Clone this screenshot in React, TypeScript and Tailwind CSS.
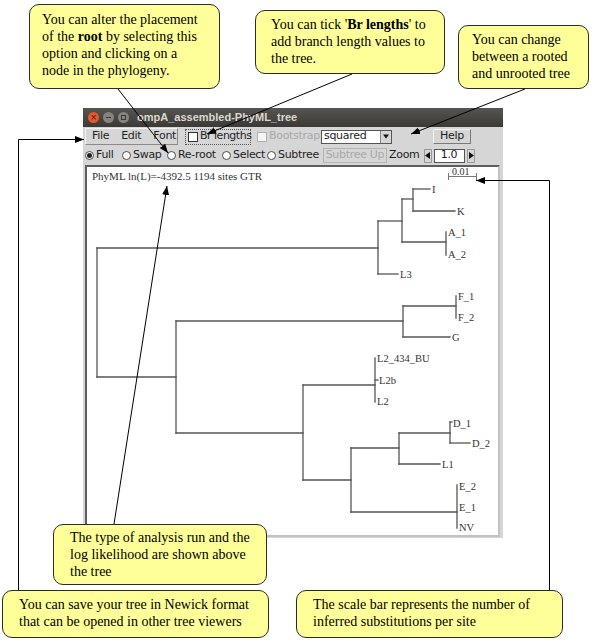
import React from 'react';

type Seg = [number, number, number, number];

// tree branches, in page coordinates (the svg viewBox starts at the canvas corner)
const branches: Seg[] = [
  [97, 248, 97, 377],
  [97, 248, 378, 248],
  [97, 377, 176, 377],
  [378, 221, 378, 274],
  [378, 221, 402, 221],
  [378, 274, 398, 274],
  [402, 199, 402, 242],
  [402, 199, 413, 199],
  [402, 242, 446, 242],
  [413, 189, 413, 211],
  [413, 189, 430, 189],
  [413, 211, 455, 211],
  [446, 232, 446, 255],
  [176, 321, 176, 433],
  [176, 321, 403, 321],
  [176, 433, 303, 433],
  [403, 306, 403, 337],
  [403, 306, 456, 306],
  [403, 337, 450, 337],
  [456, 296, 456, 318],
  [303, 385, 303, 480],
  [303, 385, 375, 385],
  [375, 358, 375, 402],
  [375, 380, 378, 380],
  [303, 480, 351, 480],
  [351, 448, 351, 512],
  [351, 448, 399, 448],
  [351, 512, 457, 512],
  [399, 433, 399, 464],
  [399, 433, 450, 433],
  [399, 464, 440, 464],
  [450, 422, 450, 443],
  [450, 422, 452, 422],
  [450, 443, 470, 443],
  [457, 485, 457, 528],
];

const labels: { t: string; x: number; y: number }[] = [
  { t: 'I', x: 432, y: 189 },
  { t: 'K', x: 457, y: 211 },
  { t: 'A_1', x: 448, y: 232 },
  { t: 'A_2', x: 448, y: 254 },
  { t: 'L3', x: 400, y: 274 },
  { t: 'F_1', x: 458, y: 296 },
  { t: 'F_2', x: 458, y: 317 },
  { t: 'G', x: 452, y: 337 },
  { t: 'L2_434_BU', x: 377, y: 358 },
  { t: 'L2b', x: 379, y: 380 },
  { t: 'L2', x: 377, y: 401 },
  { t: 'D_1', x: 453, y: 423 },
  { t: 'D_2', x: 472, y: 443 },
  { t: 'L1', x: 442, y: 464 },
  { t: 'E_2', x: 459, y: 486 },
  { t: 'E_1', x: 459, y: 507 },
  { t: 'NV', x: 459, y: 527 },
];

const Callout: React.FC<{ className: string; children: React.ReactNode }> = ({ className, children }) => (
  <div
    className={`absolute z-20 rounded-[10px] border border-[#2b2b2b] bg-[#ffff99] whitespace-nowrap font-['Liberation_Serif','Times_New_Roman',serif] text-[14px] leading-[17px] text-black ${className}`}
  >
    {children}
  </div>
);

const Radio: React.FC<{ checked?: boolean }> = ({ checked }) => (
  <span className="w-[9px] h-[9px] rounded-full border border-[#4a4a4a] bg-white flex items-center justify-center shrink-0">
    {checked && <span className="w-[5px] h-[5px] rounded-full bg-[#222]" />}
  </span>
);

const RadioItem: React.FC<{ label: string; w: string; checked?: boolean }> = ({ label, w, checked }) => (
  <div className={`flex items-center gap-[2px] shrink-0 ${w}`}>
    <Radio checked={checked} />
    <span>{label}</span>
  </div>
);

const Tri: React.FC<{ dir: 'left' | 'right' | 'down' }> = ({ dir }) => (
  <svg width="6" height="7" viewBox="0 0 6 7">
    {dir === 'left' && <path d="M5,0 L0,3.5 L5,7 z" fill="#111" />}
    {dir === 'right' && <path d="M1,0 L6,3.5 L1,7 z" fill="#111" />}
    {dir === 'down' && <path d="M0,1.5 L6,1.5 L3,5.5 z" fill="#111" />}
  </svg>
);

const App: React.FC = () => {
  return (
    <div className="relative w-[596px] h-[644px] bg-white overflow-hidden">
      {/* the PhyML window */}
      <div className="absolute left-[83px] top-[108px] w-[420px] h-[430px] flex flex-col bg-[#d6d6d6] whitespace-nowrap font-['DejaVu_Sans',sans-serif] text-[11px] tracking-[-0.3px] text-[#1e1e1e]">
        <div className="h-[19px] flex items-center pl-[5px] bg-gradient-to-b from-[#56554f] to-[#3b3a36] tracking-normal">
          <span className="w-[11px] h-[11px] rounded-full bg-[#e5582a] flex items-center justify-center text-[8px] leading-none text-[#3a1a0c]">×</span>
          <span className="ml-[4px] w-[11px] h-[11px] rounded-full bg-[#85847e] flex items-center justify-center">
            <span className="w-[5px] h-[1px] bg-[#3b3a36]" />
          </span>
          <span className="ml-[4px] w-[11px] h-[11px] rounded-full bg-[#85847e] flex items-center justify-center">
            <span className="w-[5px] h-[5px] border border-[#3b3a36]" />
          </span>
          <span className="ml-[8px] font-['Liberation_Sans',sans-serif] font-bold text-[11px] text-[#dcd8cf]">
            ompA_assembled-PhyML_tree
          </span>
        </div>

        {/* menu + options row */}
        <div className="h-[19px] flex items-center pl-[2px]">
          <div className="w-[93px] h-[17px] shrink-0 flex items-center pl-[6px] gap-[12px] border border-t-[#f2f2f2] border-l-[#f2f2f2] border-b-[#8a8a8a] border-r-[#8a8a8a]">
            <span>File</span>
            <span>Edit</span>
            <span>Font</span>
          </div>
          <div className="ml-[7px] w-[66px] h-[16px] shrink-0 flex items-center pl-[2px] border border-dotted border-[#555]">
            <span className="w-[10px] h-[10px] bg-white border border-[#333] shrink-0" />
            <span className="ml-[2px] tracking-[-0.5px]">Br lengths</span>
          </div>
          <div className="ml-[6px] w-[64px] shrink-0 flex items-center overflow-hidden">
            <span className="w-[10px] h-[10px] bg-[#f4f4f4] border border-[#b0b0b0] shrink-0" />
            <span className="ml-[2px] text-[#a9a9a9]">Bootstrap</span>
          </div>
          <div className="w-[71px] h-[14px] shrink-0 flex items-center bg-white border border-[#555]">
            <span className="pl-[2px]">squared</span>
            <span className="ml-auto w-[11px] h-full flex items-center justify-center bg-[#d6d6d6] border-l border-[#888]">
              <Tri dir="down" />
            </span>
          </div>
          <div className="ml-[41px] w-[38px] h-[15px] shrink-0 flex items-center justify-center border border-t-[#f2f2f2] border-l-[#f2f2f2] border-b-[#7a7a7a] border-r-[#7a7a7a]">
            Help
          </div>
        </div>

        {/* mode row */}
        <div className="h-[19px] flex items-center pl-[2px]">
          <RadioItem label="Full" w="w-[37px]" checked />
          <RadioItem label="Swap" w="w-[45px]" />
          <RadioItem label="Re-root" w="w-[55px]" />
          <RadioItem label="Select" w="w-[45px]" />
          <RadioItem label="Subtree" w="w-[56px]" />
          <div className="w-[64px] h-[15px] shrink-0 flex items-center justify-center border border-[#b4b4b4] text-[#a9a9a9]">
            Subtree Up
          </div>
          <span className="ml-[2px]">Zoom</span>
          <div className="ml-[4px] flex items-center gap-[2px]">
            <span className="w-[8px] h-[14px] flex items-center justify-center border border-[#9a9a9a]">
              <Tri dir="left" />
            </span>
            <span className="w-[31px] h-[14px] flex items-center justify-center bg-white border border-[#555]">1.0</span>
            <span className="w-[8px] h-[14px] flex items-center justify-center border border-[#9a9a9a]">
              <Tri dir="right" />
            </span>
          </div>
        </div>

        {/* tree canvas */}
        <div className="ml-[2px] w-[415px] h-[372px] border-2 border-t-[#5e5e5e] border-l-[#5e5e5e] border-r-[#c2c2c2] border-b-[#c2c2c2] bg-white tracking-normal">
          <svg width="411" height="368" viewBox="87 167 411 368" className="block">
            <text x="92" y="180" fontSize="11" fill="#333" fontFamily="Liberation Serif, serif">
              PhyML ln(L)=-4392.5 1194 sites GTR
            </text>
            <text x="452" y="175" fontSize="10" fill="#333" fontFamily="Liberation Serif, serif">
              0.01
            </text>
            <g stroke="#777" strokeWidth="1">
              <line x1="448" y1="176.5" x2="477" y2="176.5" />
              <line x1="448.5" y1="173" x2="448.5" y2="180" />
              <line x1="476.5" y1="173" x2="476.5" y2="180" />
            </g>
            <g stroke="#555" strokeWidth="1.3" strokeLinecap="square">
              {branches.map(([x1, y1, x2, y2], i) => (
                <line key={i} x1={x1} y1={y1} x2={x2} y2={y2} />
              ))}
            </g>
            <g fontSize="10.5" fill="#333" fontFamily="Liberation Serif, serif">
              {labels.map(l => (
                <text key={l.t} x={l.x} y={l.y + 4}>
                  {l.t}
                </text>
              ))}
            </g>
          </svg>
        </div>
      </div>

      {/* arrows */}
      <svg className="absolute left-0 top-0 z-10 pointer-events-none" width="596" height="644">
        <defs>
          <marker id="ah" markerWidth="10" markerHeight="8" refX="9" refY="4" orient="auto" markerUnits="userSpaceOnUse">
            <path d="M0,0.5 L9,4 L0,7.5 z" fill="#000" />
          </marker>
        </defs>
        <g stroke="#000" strokeWidth="1" fill="none" markerEnd="url(#ah)">
          <line x1="118" y1="89" x2="168" y2="153" />
          <line x1="352" y1="74" x2="207" y2="134" />
          <line x1="525" y1="89" x2="411" y2="134" />
          <polyline points="18.5,590 18.5,139.5 84,139.5" />
          <polyline points="549.5,590 549.5,180.5 476,180.5" />
          <line x1="114" y1="524" x2="167" y2="186" />
        </g>
      </svg>

      {/* callouts */}
      <Callout className="left-[29px] top-[4px] w-[191px] h-[85px] pl-[12px] pt-[6px]">
        You can alter the placement
        <br />
        of the <b>root</b> by selecting this
        <br />
        option and clicking on a
        <br />
        node in the phylogeny.
      </Callout>
      <Callout className="left-[255px] top-[10px] w-[190px] h-[64px] pl-[15px] pt-[5px]">
        You can tick '<b>Br lengths</b>' to
        <br />
        add branch length values to
        <br />
        the tree.
      </Callout>
      <Callout className="left-[458px] top-[25px] w-[131px] h-[64px] pl-[13px] pt-[5px]">
        You can change
        <br />
        between a rooted
        <br />
        and unrooted tree
      </Callout>
      <Callout className="left-[53px] top-[524px] w-[214px] h-[61px] pl-[16px] pt-[4px]">
        The type of analysis run and the
        <br />
        log likelihood are shown above
        <br />
        the tree
      </Callout>
      <Callout className="left-[2px] top-[590px] w-[267px] h-[48px] pl-[16px] pt-[5px]">
        You can save your tree in Newick format
        <br />
        that can be opened in other tree viewers
      </Callout>
      <Callout className="left-[296px] top-[590px] w-[267px] h-[48px] pl-[16px] pt-[5px]">
        The scale bar represents the number of
        <br />
        inferred substitutions per site
      </Callout>
    </div>
  );
};

export default App;
